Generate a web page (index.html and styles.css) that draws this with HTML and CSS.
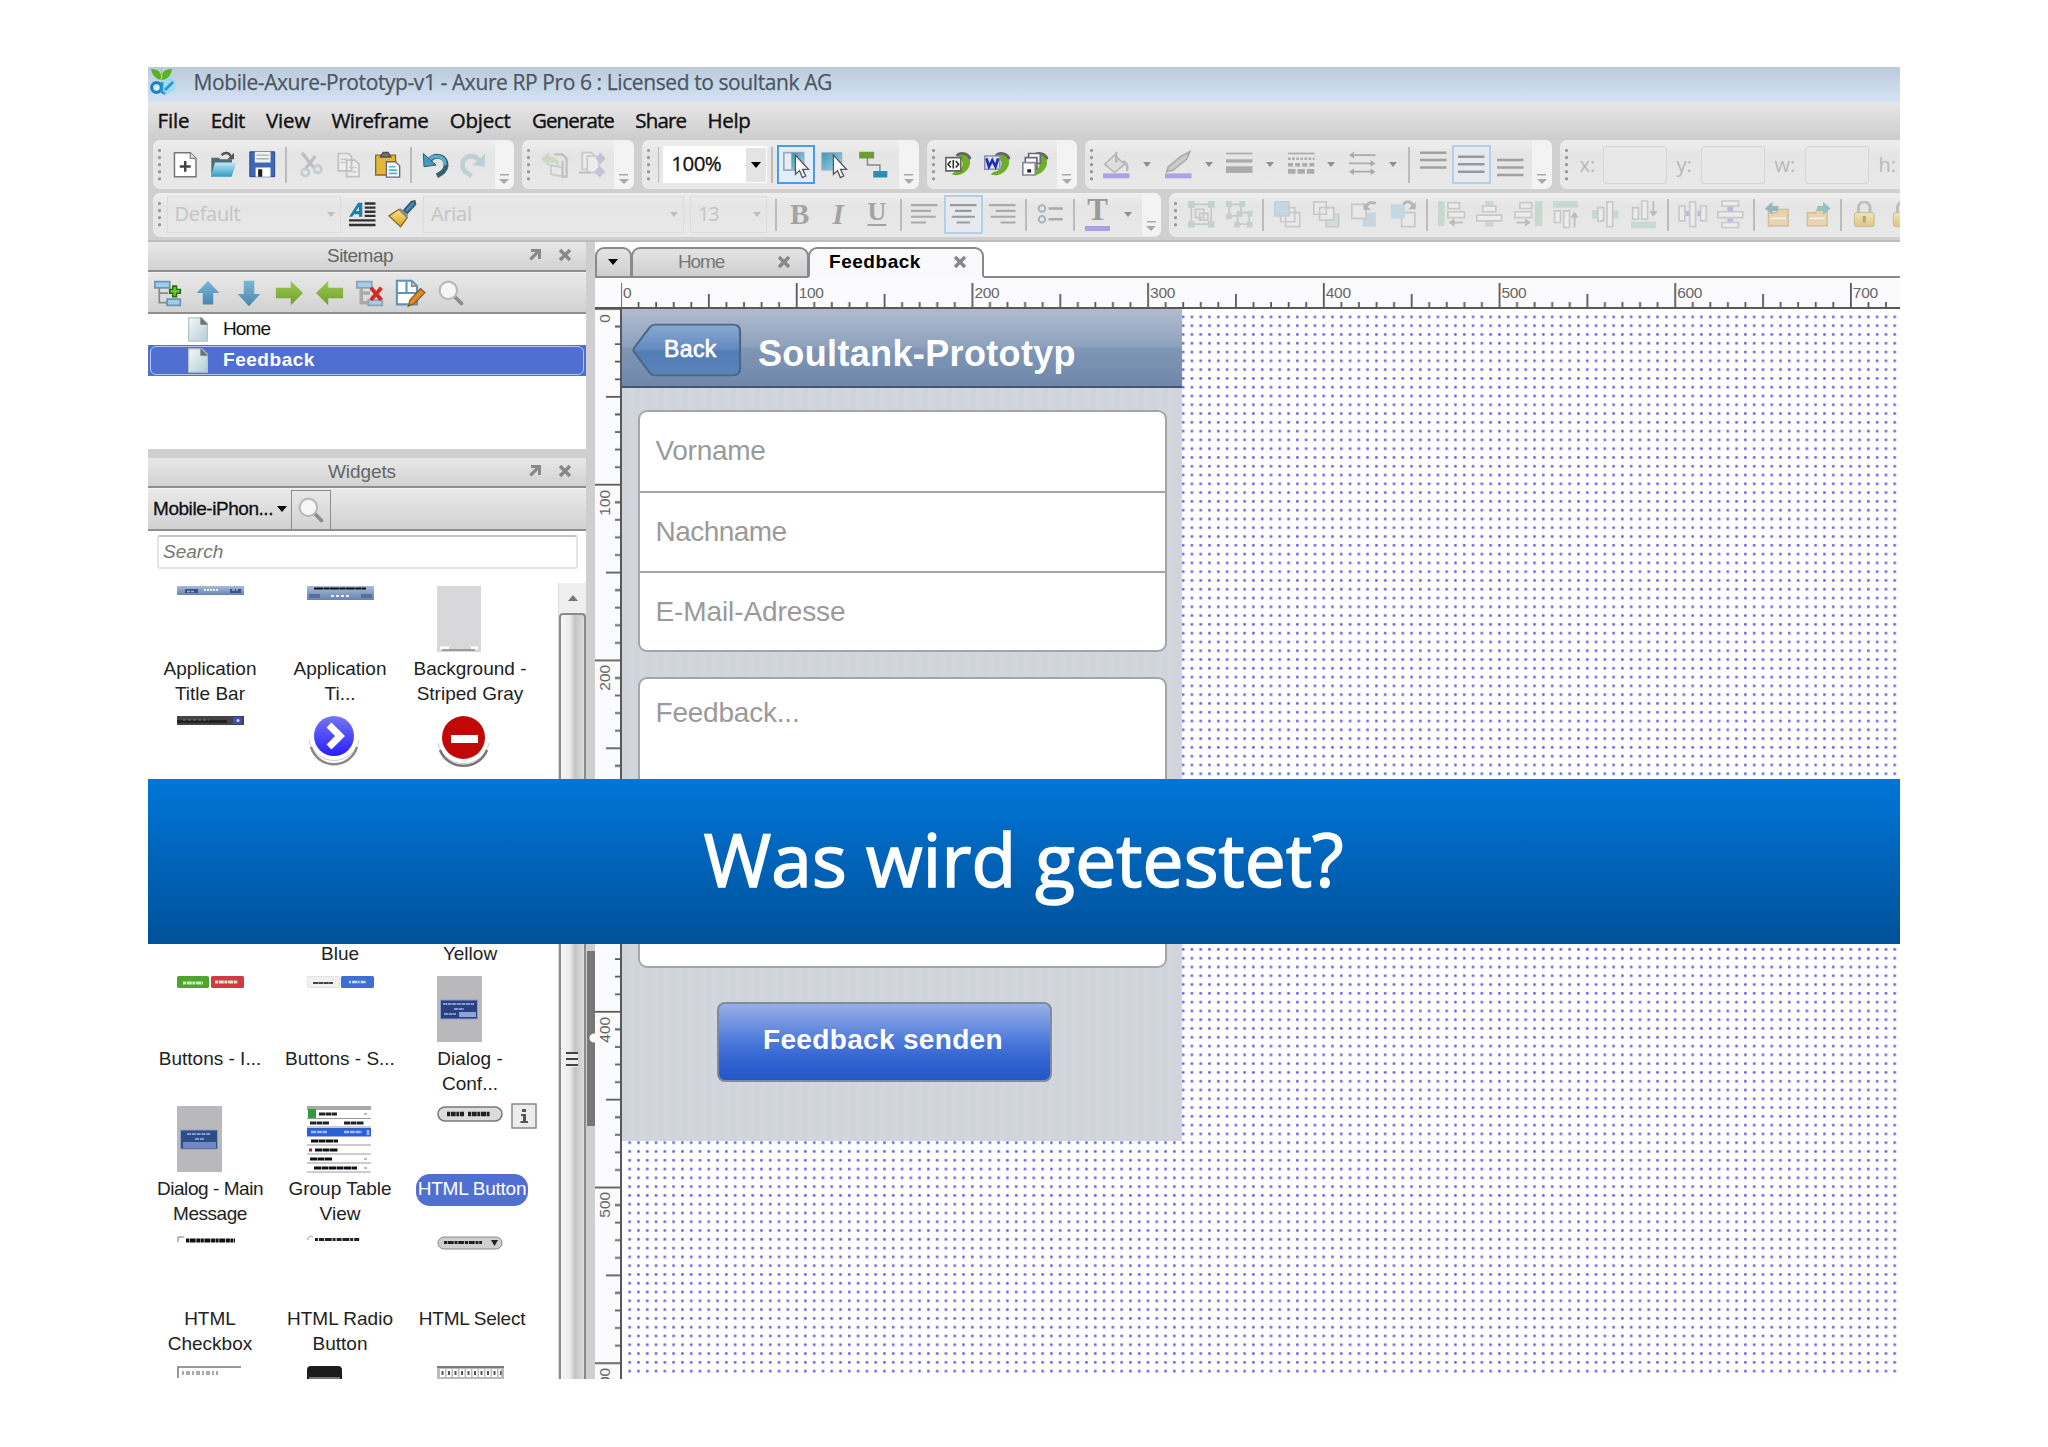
FILE: index.html
```html
<!DOCTYPE html>
<html lang="de">
<head>
<meta charset="utf-8">
<title>Mobile-Axure-Prototyp-v1</title>
<link rel="stylesheet" href="styles.css">
</head>
<body>
<svg class="defs" width="0" height="0">
  <defs>
    <linearGradient id="gBlue" x1="0" y1="0" x2="0" y2="1"><stop offset="0" stop-color="#bfe9f7"/><stop offset="1" stop-color="#2f9cc4"/></linearGradient>
    <linearGradient id="gArrow" x1="0" y1="0" x2="0" y2="1"><stop offset="0" stop-color="#7cb8d8"/><stop offset="1" stop-color="#4a86ad"/></linearGradient>
    <linearGradient id="gGreen" x1="0" y1="0" x2="0" y2="1"><stop offset="0" stop-color="#9ccb52"/><stop offset="1" stop-color="#6f9f2c"/></linearGradient>
    <linearGradient id="gGold" x1="0" y1="0" x2="0" y2="1"><stop offset="0" stop-color="#fbe48a"/><stop offset="1" stop-color="#d9a420"/></linearGradient>
    <linearGradient id="gPage" x1="0" y1="0" x2="1" y2="1"><stop offset="0" stop-color="#f4f8f8"/><stop offset="1" stop-color="#b4cdd6"/></linearGradient>
    <linearGradient id="gBar" x1="0" y1="0" x2="0" y2="1"><stop offset="0" stop-color="#a9bcd8"/><stop offset="1" stop-color="#6883ae"/></linearGradient>
    <linearGradient id="gTeal" x1="0" y1="0" x2="1" y2="1"><stop offset="0" stop-color="#3f93b4"/><stop offset="1" stop-color="#a5dbe8"/></linearGradient>
    <linearGradient id="gBack" x1="0" y1="0" x2="0" y2="1"><stop offset="0" stop-color="#89a9d2"/><stop offset=".5" stop-color="#6289bf"/><stop offset=".52" stop-color="#517db6"/><stop offset="1" stop-color="#5b84b7"/></linearGradient>
    <linearGradient id="gBall" x1="0" y1="0" x2="0" y2="1"><stop offset="0" stop-color="#7478ee"/><stop offset="1" stop-color="#2a1cff"/></linearGradient>
    <symbol id="magnifier" viewBox="0 0 16 16"><path d="M10 10l4 4" stroke="#8d8d8d" stroke-width="2.2" stroke-linecap="round"/><circle cx="6.5" cy="6.5" r="5" fill="#f6f6f6" stroke="#b9b9b9" stroke-width="1.2"/></symbol>
    <symbol id="page" viewBox="0 0 16 16"><path d="M2 .5h8.500l3.500 3.500v11.500H2z" fill="url(#gPage)" stroke="#b9c3c7" stroke-width=".8"/><path d="M9.500 0l5 5h-5z" fill="#6b7478"/></symbol>
    <symbol id="popout" viewBox="0 0 14 14"><path d="M3 1h10v10h-3V6L3.500 12.500l-2.300-2.300L7.500 4H3z" fill="#8a8a8a"/></symbol>
    <symbol id="cross" viewBox="0 0 14 14"><path d="M2 2l10 10M12 2L2 12" stroke="#888" stroke-width="3.400"/></symbol>
    <symbol id="pagecurl" viewBox="0 0 16 16"><path d="M8 2.500c4-3 8 1 7 5.500-1 4.500-6 8-11 6l2-1.500c3 0 5-2.500 4.500-6z" fill="#6fae24"/><path d="M7 3c2-2.500 7-2 8.300 2" fill="none" stroke="#666" stroke-width="1.600"/></symbol>
    <symbol id="folder" viewBox="0 0 16 16"><path d="M2 7h5l1-2h6v10H2z" fill="#eac27a" stroke="#b88a4c" stroke-width=".7"/><path d="M3.500 10.500h9" stroke="#fff" stroke-width="1"/></symbol>
    <symbol id="lock" viewBox="0 0 16 16"><path d="M4.500 7V4a3.500 3.500 0 017 0v3" fill="none" stroke="#999" stroke-width="1.800"/><rect x="2" y="7" width="12" height="8.500" rx="1.500" fill="url(#gGold)" stroke="#a98f3c" stroke-width=".6"/><path d="M8 9v4" stroke="#7a6520" stroke-width="1.800"/></symbol>
  </defs>
</svg>

<main class="app">
  <header class="titlebar">
    <svg class="logo" viewBox="0 0 28 28"><path d="M12 12l9-3 6 5-1 8-9 5-7-5z" fill="#9fdaf0"/><path d="M2 1c6 0 9 2 10 6 2-4 6-6 11-6-1 7-5 11-11 11C7 11 3 7 2 1z" fill="#5cb026"/><path d="M12 1c1 3 1 7 0 11" stroke="#9ad85c" stroke-width="1.500" fill="none"/><circle cx="7.500" cy="19.500" r="4.800" fill="#d8f0fa" stroke="#1c83bd" stroke-width="3.200"/><path d="M13 14v10l3 2M16 22l8-8" stroke="#2b93cb" stroke-width="2.600" fill="none"/></svg>
    <span>Mobile-Axure-Prototyp-v1 - Axure RP Pro 6 : Licensed to soultank AG</span>
  </header>
  <nav class="menubar">
    <span class="m-file">File</span><span class="m-edit">Edit</span><span class="m-view">View</span><span class="m-wire">Wireframe</span><span class="m-obj">Object</span><span class="m-gen">Generate</span><span class="m-share">Share</span><span class="m-help">Help</span>
  </nav>

  <section class="toolbars">
    <div class="row row-top">
      <div class="bar bar-file">
        <i class="grip"></i>
        <b class="ico"><svg viewBox="0 0 16 16"><path d="M1.500 1h9.500l3.500 3.500V15.500h-13z" fill="#fff" stroke="#777" stroke-width=".9"/><path d="M11 1v3.500h3.500" fill="#ddd" stroke="#888" stroke-width=".8"/><path d="M8 6v6.500M4.700 9.300h6.600" stroke="#444" stroke-width="1.500"/></svg></b>
        <b class="ico"><svg viewBox="0 0 16 16"><path d="M.8 4h4.500l1 1h7v9H.8z" fill="#4f6b78"/><path d="M3 7h13l-3 8.500H.5z" fill="url(#gBlue)"/><path d="M7 2.500c2-2 4.500-1.500 5.500.5" fill="none" stroke="#555" stroke-width="1.500"/><path d="M14.500 1v4h-4z" fill="#555"/></svg></b>
        <b class="ico"><svg viewBox="0 0 16 16"><path d="M.5.500h15v15h-15z" fill="#3f66b4" stroke="#27458a" stroke-width=".6"/><path d="M3.500.5h9.500v6.500H3.500z" fill="#f3f3ee"/><path d="M4.500 2.500h7.500M4.500 4.700h7.500" stroke="#a8b0b8" stroke-width=".8"/><path d="M4 10h9v5.500H4z" fill="#fff"/><path d="M5.500 11h2.500v4.500H5.500z" fill="#222"/></svg></b>
        <i class="sep"></i>
        <b class="ico off"><svg viewBox="0 0 16 16"><path d="M3 1l7 9M11 3l-6 8" stroke="#555" stroke-width="2"/><circle cx="5" cy="13" r="2.200" fill="none" stroke="#5c8890" stroke-width="1.600"/><circle cx="12.500" cy="11" r="2.200" fill="none" stroke="#5c8890" stroke-width="1.600"/></svg></b>
        <b class="ico off"><svg viewBox="0 0 16 16"><path d="M2 1.500h6l2 2V12H2zM7 5.500h5l2.500 2.500v7.500H7z" fill="#fff" stroke="#555"/><path d="M3.500 5h4M3.500 7h3M8.500 10h4.500M8.500 12.500h4.500" stroke="#777" stroke-width=".9"/></svg></b>
        <b class="ico"><svg viewBox="0 0 16 16"><path d="M1 2.500h12v12H1z" fill="#e3b73b" stroke="#8c6a1a" stroke-width=".8"/><path d="M4 3.500L5.500 1h3L10 3.500z" fill="#777" stroke="#555"/><path d="M7.500 6.500h5.500L15.500 9v6.800h-8z" fill="#f4fafc" stroke="#667" stroke-width=".8"/><path d="M9 9.500h4M9 11.500h5M9 13.500h5" stroke="#5db0cf"/></svg></b>
        <i class="sep"></i>
        <b class="ico"><svg viewBox="0 0 16 16"><path d="M4 6c4-5 11-3 10.500 3-.3 3-2.500 4.500-5.500 6" fill="none" stroke="#356072" stroke-width="3"/><path d="M4 5.500c4-4 10-2.500 9.800 3" fill="none" stroke="#58aed2" stroke-width="2"/><path d="M.8 1.500l.4 8 7.300-1z" fill="#3f9cc4" stroke="#356072" stroke-width=".6"/></svg></b>
        <b class="ico off"><svg viewBox="0 0 16 16"><path d="M12 6C8 1 1 3 1.500 9c.3 3 2.500 4.500 5.500 6" fill="none" stroke="#5797a3" stroke-width="3"/><path d="M15.200 1.500l-.4 8-7.300-1z" fill="#4a96a3"/></svg></b>
        <i class="more"></i>
      </div>
      <div class="bar bar-adapt">
        <i class="grip"></i>
        <b class="ico off"><svg viewBox="0 0 16 16"><path d="M6 8.500l7 1.500v5.500l-7-1.500z" fill="#e8e8e8" stroke="#777"/><path d="M8 2h5l2.500 2.500v11H13V6" fill="#ddd" stroke="#555" stroke-width="1.300"/><path d="M0 5l5-4.500v2.800c5 0 6.500 3 6 7.200C9.500 7.500 8 7 5 7v2.700z" fill="#8bb56a"/></svg></b>
        <b class="ico off"><svg viewBox="0 0 16 16"><path d="M2 1h5.500l2 2v8H2z" fill="#fff" stroke="#777"/><path d="M5 3h5l2 2v8H5z" fill="#fff" stroke="#777"/><path d="M0 13h7" stroke="#555" stroke-width="1.300"/><path d="M13 1l3 3.500-3 3.500-3-3.500zM12.500 9l3.500 3.500-3.500 3.500L9 12.500z" fill="#665fb0"/></svg></b>
        <i class="more"></i>
      </div>
      <div class="bar bar-zoom">
        <i class="grip"></i><i class="sep"></i>
        <div class="zoom"><span>100%</span><em></em></div>
        <i class="sep"></i>
        <b class="ico on"><svg viewBox="0 0 16 16"><path d="M.5 1h12v10.500H.5z" fill="#e6eef2" stroke="#9ab"/><path d="M5 1h7.500v10.500H5z" fill="url(#gTeal)"/><path d="M7.500 2.500v11.500l2.500-2.200 1.700 4.200 2-.9-1.900-4h3.600z" fill="#fff" stroke="#555" stroke-width=".8"/></svg></b>
        <b class="ico"><svg viewBox="0 0 16 16"><path d="M.5 1h12v10.500H.5z" fill="url(#gTeal)" stroke="#9ab" stroke-width=".6"/><path d="M7.500 2.500v11.500l2.500-2.200 1.700 4.200 2-.9-1.900-4h3.600z" fill="#fff" stroke="#555" stroke-width=".8"/></svg></b>
        <b class="ico"><svg viewBox="0 0 16 16"><path d="M4.500 4v4.500h7.500v4" fill="none" stroke="#888" stroke-width=".9"/><path d="M-.5.500h9V4.500h-9z" fill="#6d9c34"/><path d="M8 12h8.500v4H8z" fill="#2c8fb2"/></svg></b>
        <i class="more"></i>
      </div>
      <div class="bar bar-gen">
        <i class="grip"></i>
        <b class="ico"><svg viewBox="0 0 16 16"><use href="#pagecurl"/><path d="M.5 4h9v8h-9z" fill="#fff" stroke="#666"/><path d="M3.500 6L1.800 8l1.700 2M6.500 6l1.700 2-1.700 2M5 5.500v5" fill="none" stroke="#333"/></svg></b>
        <b class="ico"><svg viewBox="0 0 16 16"><use href="#pagecurl"/><path d="M.5 3h9v8h-9z" fill="#dfe6f8" stroke="#8a93b5"/><path d="M1.500 4.500l1.500 5 2-4 2 4 1.500-5" fill="none" stroke="#1d2fae" stroke-width="1.600"/></svg></b>
        <b class="ico"><svg viewBox="0 0 16 16"><use href="#pagecurl"/><path d="M4 1.500h7v6H4z" fill="#fff" stroke="#667"/><path d="M2 4h7v7H2z" fill="#fff" stroke="#667"/><path d="M.5 7H8v7.500H.5z" fill="#fff" stroke="#889"/><path d="M3.200 11h2.300v2H3.200z" fill="#222"/></svg></b>
        <i class="more"></i>
      </div>
      <div class="bar bar-style">
        <i class="grip"></i>
        <b class="ico dim"><svg viewBox="0 0 16 16"><path d="M1 8l6-5.500 6 5.500-6 5z" fill="#d8d8d8" stroke="#999"/><path d="M8 7V.5M12.500 6c2 2 2.500 3 2 6" fill="none" stroke="#999" stroke-width="1.400"/><path d="M0 13.500h16v3H0z" fill="#887ae0"/></svg></b><i class="caret"></i>
        <b class="ico dim"><svg viewBox="0 0 16 16"><path d="M1 12.500L2 9.500 10 3l5-2.500-2 4.500-8 6.500z" fill="#bbb" stroke="#888"/><path d="M0 13.500h16v3H0z" fill="#887ae0"/></svg></b><i class="caret"></i>
        <b class="ico dim"><svg viewBox="0 0 16 16"><path d="M0 1.500h16" stroke="#888"/><path d="M0 6h16" stroke="#888" stroke-width="2"/><path d="M0 11.200h16" stroke="#888" stroke-width="4"/></svg></b><i class="caret"></i>
        <b class="ico dim"><svg viewBox="0 0 16 16"><path d="M0 1.500h16" stroke="#888"/><path d="M0 4.700h16" stroke="#888" stroke-width="1.600" stroke-dasharray="1.500 1"/><path d="M0 8.300h16" stroke="#888" stroke-width="2.200" stroke-dasharray="3 1.300"/><path d="M0 12.300h16" stroke="#888" stroke-width="3" stroke-dasharray="4.500 1.200"/></svg></b><i class="caret"></i>
        <b class="ico dim"><svg viewBox="0 0 16 16"><path d="M1 2.500h15M0 7.500h15M1 12.500h14" stroke="#888" stroke-width="1.100"/><path d="M3 .5v4L0 2.500zM13 5.500v4l3-2zM3 10.500v4l-3-2zM13 10.500v4l3-2z" fill="#888"/></svg></b><i class="caret"></i>
        <i class="sep"></i>
        <b class="ico dim"><svg viewBox="0 0 16 16"><path d="M0 1h16M0 5.500h16M0 10h16" stroke="#777" stroke-width="1.500"/></svg></b>
        <b class="ico on pale"><svg viewBox="0 0 16 16"><path d="M0 3.500h16M0 8h16M0 12.500h16" stroke="#999" stroke-width="1.500"/></svg></b>
        <b class="ico dim"><svg viewBox="0 0 16 16"><path d="M0 5.500h16M0 10h16M0 14.500h16" stroke="#777" stroke-width="1.500"/></svg></b>
        <i class="more"></i>
      </div>
      <div class="bar bar-pos">
        <i class="grip"></i>
        <label>x:</label><i class="field"></i><label class="ly">y:</label><i class="field"></i><label class="lw">w:</label><i class="field"></i><label>h:</label>
      </div>
    </div>

    <div class="row row-bottom">
      <div class="bar bar-text">
        <i class="grip"></i>
        <div class="combo c-style"><span>Default</span><i class="caret"></i></div>
        <b class="ico"><svg viewBox="0 0 16 16"><path d="M0 9.500L5.500 1H8v8.500H6V8H3L2 9.500zM4.200 6H6V3.500z" fill="#1f7fa8"/><path d="M9.500 1.500H16M9.500 4H16M9.500 6.500H16M9.500 9H16M0 11.700h16M0 14.500h16" stroke="#333" stroke-width="1.400"/></svg></b>
        <b class="ico wide"><svg viewBox="0 0 16 16"><path d="M15.500 0l.5 2-5 5.500-2-2L13.500.5z" fill="#3c8fbd" stroke="#356"/><path d="M6 5l5 5-4 5.500L0 9z" fill="url(#gGold)" stroke="#8b6a1c" stroke-width=".8"/><path d="M6.500 5l4.500 4.500" stroke="#8a8a8a" stroke-width="1.800"/></svg></b>
        <div class="combo c-font"><span>Arial</span><i class="caret"></i></div>
        <div class="combo c-size"><span>13</span><i class="caret"></i></div>
        <i class="sep"></i>
        <b class="ico fmt bold">B</b><b class="ico fmt ital">I</b><b class="ico fmt under">U</b>
        <i class="sep"></i>
        <b class="ico dim"><svg viewBox="0 0 16 16"><path d="M0 2.500h16M0 6h12M0 9.500h15M0 13h9" stroke="#888" stroke-width="1.300"/></svg></b>
        <b class="ico on pale"><svg viewBox="0 0 16 16"><path d="M0 2.500h16M3 6h10M1 9.500h14M4 13h8" stroke="#999" stroke-width="1.300"/></svg></b>
        <b class="ico dim"><svg viewBox="0 0 16 16"><path d="M0 2.500h16M4 6h12M1 9.500h15M7 13h9" stroke="#888" stroke-width="1.300"/></svg></b>
        <i class="sep"></i>
        <b class="ico dim"><svg viewBox="0 0 16 16"><circle cx="3" cy="4.500" r="2" fill="none" stroke="#7a9aa5" stroke-width="1.200"/><circle cx="3" cy="11" r="2" fill="none" stroke="#7a9aa5" stroke-width="1.200"/><path d="M7 4.500h8.500M7 11h8.500" stroke="#888" stroke-width="1.500"/></svg></b>
        <i class="sep"></i>
        <b class="ico tcolor">T</b><i class="caret"></i>
        <i class="more"></i>
      </div>
      <div class="bar bar-arrange">
        <i class="grip"></i>
        <b class="ico off"><svg viewBox="0 0 16 16"><path d="M2 2h12v12H2zM4.500 5h5v5h-5zM7 7.500h5v4H7z" fill="none" stroke="#777"/><path d="M0 0h4v4H0zM12 0h4v4h-4zM0 12h4v4H0zM12 12h4v4h-4z" fill="#5f948c"/></svg></b>
        <b class="ico off"><svg viewBox="0 0 16 16"><path d="M2 2h7v7H2zM7 7h7v7H7z" fill="none" stroke="#777"/><path d="M0 0h3.500v3.500H0zM8 0h3.500v3.500H8zM0 7.500h3.500V11H0zM6.500 6H10v3.500H6.500zM13 6h3v3.500h-3zM5 12.500h3.500V16H5zM12.500 12.500H16V16h-3.500z" fill="#5f948c"/></svg></b>
        <i class="sep"></i>
        <b class="ico off"><svg viewBox="0 0 16 16"><path d="M7 7h8.500v8.500H7zM4 4h8.500v8.500H4z" fill="#f2f2f2" stroke="#777"/><path d="M.5.500H9V9H.5z" fill="#69b3d8" stroke="#6a8fa5"/></svg></b>
        <b class="ico off"><svg viewBox="0 0 16 16"><path d="M8 8h7.500v7.500H8z" fill="#8fc4c4" stroke="#777"/><path d="M4 4h8.500v7.500H4zM.5.500H8V8H.5z" fill="#f2f2f2" stroke="#777"/></svg></b>
        <b class="ico off"><svg viewBox="0 0 16 16"><path d="M7 7h8v8.500H7z" fill="#69a8d8"/><path d="M.5 2H9v8.500H.5z" fill="#f2f2f2" stroke="#777"/><path d="M15 1.500c-3-1.500-5 0-6 2" fill="none" stroke="#333" stroke-width="1.800"/><path d="M7.500 1v4.500H12z" fill="#333"/></svg></b>
        <b class="ico off"><svg viewBox="0 0 16 16"><path d="M7 7h8v8.500H7z" fill="#f2f2f2" stroke="#777"/><path d="M.5 2H9v8.500H.5z" fill="#69b3d8"/><path d="M8 2c2-2.500 4.500-2 6 1" fill="none" stroke="#333" stroke-width="1.800"/><path d="M15.500.500V5H11z" fill="#333"/></svg></b>
        <i class="sep"></i>
        <b class="ico off"><svg viewBox="0 0 16 16"><path d="M0 0h4v15H0z" fill="#6fb595"/><path d="M6 1h7v3.500H6zM6 6.500h10V10H6z" fill="#fff" stroke="#777"/><path d="M7 13h8" stroke="#444"/><path d="M10 10.500v5L6.500 13z" fill="#444"/></svg></b>
        <b class="ico off"><svg viewBox="0 0 16 16"><path d="M5.500 0h5v3h-5zM5.500 12h5v3.500h-5z" fill="#6fb595"/><path d="M4 3h8v3.500H4zM.5 8.500h15V12H.500z" fill="#fff" stroke="#777"/></svg></b>
        <b class="ico off"><svg viewBox="0 0 16 16"><path d="M12 0h4.500v15H12z" fill="#6fb595"/><path d="M3 1h7v3.500H3zM0 6.500h10V10H0z" fill="#fff" stroke="#777"/><path d="M1 13h8" stroke="#444"/><path d="M6 10.500v5L9.500 13z" fill="#444"/></svg></b>
        <b class="ico off"><svg viewBox="0 0 16 16"><path d="M0 0h15v4H0z" fill="#6fb595"/><path d="M1 6h3.500v7H1zM6.500 6H10v10H6.500z" fill="#fff" stroke="#777"/><path d="M13 8v8" stroke="#444"/><path d="M10.500 10h5L13 6.500z" fill="#444"/></svg></b>
        <b class="ico off"><svg viewBox="0 0 16 16"><path d="M0 5.500h3v5H0zM13 5.500h3v5h-3z" fill="#6fb595"/><path d="M3.500 4H7v8H3.500zM9 .500h3.500v15H9z" fill="#fff" stroke="#777"/></svg></b>
        <b class="ico off"><svg viewBox="0 0 16 16"><path d="M0 12.500h15v4H0z" fill="#6fb595"/><path d="M1 4h3.500v7H1zM6.500 0H10v11H6.500z" fill="#fff" stroke="#777"/><path d="M13.500 0v8" stroke="#444"/><path d="M11 6h5l-2.500 3.500z" fill="#444"/></svg></b>
        <i class="sep"></i>
        <b class="ico off"><svg viewBox="0 0 16 16"><path d="M0 3h3.500v9H0zM6.500 .500H10v15H6.500zM13 3h3.500v9H13z" fill="#fff" stroke="#777"/><path d="M4 7.500h2M11 7.500h2" stroke="#4a3fd8" stroke-width="3"/></svg></b>
        <b class="ico off"><svg viewBox="0 0 16 16"><path d="M3 0h10v3H3zM.5 6.500h15V10H.5zM3 13h10v3H3z" fill="#fff" stroke="#777"/><path d="M8 3.500v2.500M8 10.500v2" stroke="#4a3fd8" stroke-width="3.500"/></svg></b>
        <i class="sep"></i>
        <b class="ico half"><svg viewBox="0 0 16 16"><use href="#folder"/><path d="M0 4.500L4.500.5v2.500H8v3H4.500v2.500z" fill="#4b8795"/></svg></b>
        <b class="ico half"><svg viewBox="0 0 16 16"><use href="#folder"/><path d="M16 4.500L11.500.5v2.500H8v3h3.500v2.500z" fill="#4b9bb0"/></svg></b>
        <i class="sep"></i>
        <b class="ico half"><svg viewBox="0 0 16 16"><use href="#lock"/></svg></b>
        <b class="ico half"><svg viewBox="0 0 16 16"><use href="#lock"/></svg></b>
      </div>
    </div>
  </section>

  <section class="work">
    <aside class="side">
      <div class="panel-head"><span>Sitemap</span><svg><use href="#popout"/></svg><svg><use href="#cross"/></svg></div>
      <div class="tools">
        <svg viewBox="0 0 16 16"><path d="M3 4v9.500h5M3 8h5" fill="none" stroke="#888"/><path d="M.5 1.500h8.500v3.500H.5zM7.500 11.500H15V15H7.500z" fill="#9fcdec" stroke="#6f94ab"/><path d="M11.800 3.500v7M8.500 7h7" stroke="#2a6a10" stroke-width="3"/><path d="M11.800 4.500v5M9.500 7h5" stroke="#67c832" stroke-width="1.400"/></svg>
        <svg viewBox="0 0 16 16"><path d="M8 1l6.500 7H11v6.500H5V8H1.500z" fill="url(#gArrow)"/></svg>
        <svg viewBox="0 0 16 16"><path d="M8 15.500L1.500 8.500H5V1h6v7.500h3.500z" fill="url(#gArrow)"/></svg>
        <svg viewBox="0 0 16 16"><path d="M16 8L9 15v-4H.5V5H9V1z" fill="url(#gGreen)"/></svg>
        <svg viewBox="0 0 16 16"><path d="M0 8l7-7v4h8.500v6H7v4z" fill="url(#gGreen)"/></svg>
        <svg viewBox="0 0 16 16"><path d="M3 4v9.500h5M3 8h5" fill="none" stroke="#aaa" stroke-width="2"/><path d="M.5 1.500h8.500v3.500H.5zM7 12h8v3H7z" fill="#a8cde8" stroke="#8aa5b8"/><path d="M8.500 5l6 7M14.500 5l-6 7" stroke="#d42a24" stroke-width="2.200"/></svg>
        <svg viewBox="0 0 16 16"><path d="M.5 1h8.500l3 3v10.500H.500z" fill="#fff" stroke="#5e94ba" stroke-width="1.200"/><path d="M.5 8H12M6 8V1.500" stroke="#5e94ba" stroke-width="1.200"/><path d="M9 1v3h3" fill="none" stroke="#888"/><path d="M7 15.500l1-3.500 6-6.500 2.500 2.300L10.500 14z" fill="#e08a22" stroke="#7c5a2a" stroke-width=".7"/></svg>
        <svg><use href="#magnifier"/></svg>
      </div>
      <ul class="tree">
        <li><svg><use href="#page"/></svg><span>Home</span></li>
        <li class="sel"><svg><use href="#page"/></svg><span>Feedback</span></li>
      </ul>
      <div class="panel-head second"><span>Widgets</span><svg><use href="#popout"/></svg><svg><use href="#cross"/></svg></div>
      <div class="lib"><span>Mobile-iPhon...</span><i class="caret black"></i><b><svg><use href="#magnifier"/></svg></b></div>
      <div class="search"><span>Search</span></div>
      <div class="widgets">
        <div class="grid">
          <figure><svg viewBox="0 0 67 67"><path d="M0 0h67v9H0z" fill="url(#gBar)"/><path d="M8 5h13M53 5h11" stroke="#39508c" stroke-width="4"/><path d="M10 5.500h8M55 4h6" stroke="#9fb2dc" stroke-width="1.500" stroke-dasharray="3 1"/><path d="M27 4h14" stroke="#e8eef5" stroke-width="2" stroke-dasharray="2 1"/></svg><figcaption>Application<br>Title Bar</figcaption></figure>
          <figure><svg viewBox="0 0 67 67"><path d="M0 0h67v14H0z" fill="url(#gBar)"/><path d="M7 2.500h52" stroke="#111" stroke-width="1.800" stroke-dasharray="9 .5 6 .4"/><path d="M2 10h11M54 10h11" stroke="#5570a0" stroke-width="4"/><path d="M24 10h20" stroke="#e8eef5" stroke-width="2" stroke-dasharray="3 2"/></svg><figcaption>Application<br>Ti...</figcaption></figure>
          <figure><svg viewBox="0 0 67 67"><path d="M0 0h44v66H0z" fill="#d8d8da"/><path d="M3 62h9M34 62h7" stroke="#fff" stroke-width="3"/><path d="M5 64h33" stroke="#888" stroke-width="1.500"/></svg><figcaption>Background -<br>Striped Gray</figcaption></figure>

          <figure><svg viewBox="0 0 67 67"><path d="M0 0h67v9H0z" fill="#444"/><path d="M0 5.500h50" stroke="#222" stroke-width="3"/><path d="M6 4h26" stroke="#777" stroke-width="1" stroke-dasharray="3 2"/><path d="M56 1h9v7h-9z" fill="#3f4fb8"/><circle cx="61" cy="4.500" r="1.500" fill="#cdf"/></svg></figure>
          <figure><svg viewBox="0 0 67 67"><path d="M1 20a26 26 0 0052 0z" fill="#fff"/><path d="M2 24a25.500 25.500 0 0050 0" fill="none" stroke="#ccc" stroke-width="1"/><path d="M4 31a24 24 0 0046 0" fill="none" stroke="#888" stroke-width="2.500"/><circle cx="27" cy="20" r="20" fill="url(#gBall)"/><path d="M22 9l11 11-11 11" fill="none" stroke="#fff" stroke-width="7"/></svg></figure>
          <figure><svg viewBox="0 0 67 67"><path d="M0 24a26.500 26 0 0053 0z" fill="#fff"/><path d="M1 27a26 25.500 0 0051 0" fill="none" stroke="#ccc" stroke-width="1"/><path d="M3 34a25 24 0 0047 0" fill="none" stroke="#777" stroke-width="2.500"/><circle cx="26.500" cy="21.500" r="21.500" fill="#c00808"/><path d="M14 19h27v8H14z" fill="#fff"/></svg></figure>

          <figure></figure>
          <figure><figcaption><br>Blue</figcaption></figure>
          <figure><figcaption><br>Yellow</figcaption></figure>

          <figure><svg viewBox="0 0 67 67"><rect width="32" height="12" rx="1.500" fill="#4da62b"/><rect x="34" width="33" height="12" rx="1.500" fill="#cf3a45"/><path d="M6 7h20M38 6h23" stroke="#d3ecc8" stroke-width="3" stroke-dasharray="3 .8 5 .6"/></svg><figcaption>Buttons - I...</figcaption></figure>
          <figure><svg viewBox="0 0 67 67"><rect x=".5" y=".5" width="32" height="11" rx="1.500" fill="#f0f0f0" stroke="#e2e2e2"/><rect x="34" width="33" height="12" rx="1.500" fill="#3f6fd4"/><path d="M6 7h20" stroke="#444" stroke-width="2.200" stroke-dasharray="5 .4"/><path d="M42 6h17" stroke="#c8d8f8" stroke-width="2.500" stroke-dasharray="2 1 5 .6"/></svg><figcaption>Buttons - S...</figcaption></figure>
          <figure><svg viewBox="0 0 67 67"><path d="M0 0h45v66H0z" fill="#b9b9bb"/><path d="M3.500 24h37v19h-37z" fill="#2a4180" stroke="#8f9cc4"/><path d="M6 28h31M17 33h10M7 38h12" stroke="#8599cf" stroke-width="2" stroke-dasharray="4 .6"/><path d="M22 36h17v5H22z" fill="#8fa3d8"/></svg><figcaption>Dialog -<br>Conf...</figcaption></figure>

          <figure><svg viewBox="0 0 67 67"><path d="M0 0h45v66H0z" fill="#b9b9bb"/><path d="M3.500 24h37v19h-37z" fill="#2b4c87" stroke="#8f9cc4"/><path d="M10 28h24M18 33h9" stroke="#8599cf" stroke-width="2" stroke-dasharray="4 .8"/><path d="M6 36h33v6H6z" fill="#7188c4"/></svg><figcaption class="tight">Dialog - Main<br>Message</figcaption></figure>
          <figure><svg viewBox="0 0 67 67"><path d="M0 0h64v4H0z" fill="#aaa"/><path d="M1 3h8v9H1z" fill="#2f9b3a"/><path d="M12 8h18M3 17h19M37 17h20" stroke="#222" stroke-width="3" stroke-dasharray="6 .5"/><path d="M0 12.500h64M0 21h64M0 39h64M0 48h64M0 57h64M0 66h64" stroke="#999"/><path d="M0 22h64v8.500H0z" fill="#2a5fd6"/><path d="M4 26h16M37 26h18M61 24v5" stroke="#9fc0fa" stroke-width="2.500" stroke-dasharray="5 .8"/><path d="M4 35h27M8 44h23M3 53h22M7 62h43" stroke="#111" stroke-width="3" stroke-dasharray="7 .5"/><path d="M2 44h3" stroke="#b02030" stroke-width="3"/><path d="M57 8h3M57 53h3M57 62h3" stroke="#bbb" stroke-width="2"/></svg><figcaption>Group Table<br>View</figcaption></figure>
          <figure class="picked"><svg viewBox="0 0 67 67"><rect x="1" y="1" width="64" height="14" rx="7" fill="#dcdcdc" stroke="#777" stroke-width="1.500"/><path d="M10 8h17M31 8h22" stroke="#222" stroke-width="4.500" stroke-dasharray="3 .7 5 .6"/></svg><svg class="info" viewBox="0 0 26 26"><rect x="1" y="1" width="24" height="24" fill="#ececec" stroke="#888" stroke-width="1.500"/><path d="M11 6h4v3h-4zM10 11h5v7h2v2H9.500v-2H12v-5h-2z" fill="#555"/></svg><figcaption class="html"><mark>HTML Button</mark></figcaption></figure>

          <figure><svg viewBox="0 0 67 67"><path d="M1 6V1h6" fill="none" stroke="#777"/><path d="M9 4.500h49" stroke="#111" stroke-width="4" stroke-dasharray="3 .6 6 .7 4 .5"/></svg><figcaption>HTML<br>Checkbox</figcaption></figure>
          <figure><svg viewBox="0 0 67 67"><path d="M1 4a3 3 0 015-3" fill="none" stroke="#999"/><path d="M8 3.500h45" stroke="#222" stroke-width="3" stroke-dasharray="3 1 5 .8 7 .8"/></svg><figcaption>HTML Radio<br>Button</figcaption></figure>
          <figure><svg viewBox="0 0 67 67"><rect x="1" y="1" width="64" height="12" rx="6" fill="#cfcfcf" stroke="#888"/><path d="M7 6.500h38" stroke="#222" stroke-width="3.200" stroke-dasharray="3 .7 6 .8"/><path d="M54 4h7l-3.500 6z" fill="#222"/></svg><figcaption class="html">HTML Select</figcaption></figure>

          <figure><svg viewBox="0 0 67 67"><path d="M1 12V1h63" fill="none" stroke="#777" stroke-width="1.500"/><path d="M5 7h36" stroke="#aaa" stroke-width="4" stroke-dasharray="2 2 4 2"/></svg></figure>
          <figure><svg viewBox="0 0 67 67"><rect width="35" height="20" rx="4" fill="#1c1c1e"/><path d="M2 11h31v2H2z" fill="#777"/></svg></figure>
          <figure><svg viewBox="0 0 67 67"><path d="M0 0h67v13H0z" fill="#bbb"/><path d="M0 1h67" stroke="#666" stroke-width="1.500"/><path d="M3 7h61" stroke="#fff" stroke-width="8" stroke-dasharray="5 1.500"/><path d="M4.500 7h60" stroke="#555" stroke-width="4" stroke-dasharray="2 4.500"/></svg></figure>
        </div>
        <div class="scroll"><i class="up"></i><div class="thumb"><i></i></div></div>
      </div>
    </aside>

    <div class="splitter"><i></i></div>

    <section class="editor">
      <div class="tabs">
        <div class="tab pick"><i class="caret black"></i></div>
        <div class="tab home"><span>Home</span><svg><use href="#cross"/></svg></div>
        <div class="tab active"><span>Feedback</span><svg><use href="#cross"/></svg></div>
        <div class="fill"></div>
      </div>
      <div class="hruler">
        <svg width="1278" height="31"><defs><pattern id="ht" width="175.700" height="31" patternUnits="userSpaceOnUse" x="-.9"><path d="M.9 5v25M88.750 16v14M18.470 24v6M36.040 24v6M53.610 24v6M71.180 24v6M106.320 24v6M123.890 24v6M141.460 24v6M159.030 24v6" stroke="#585858" stroke-width="1.800"/></pattern></defs><rect width="1278" height="31" fill="url(#ht)"/></svg>
        <div class="nums"><span>0</span><span>100</span><span>200</span><span>300</span><span>400</span><span>500</span><span>600</span><span>700</span></div>
      </div>
      <div class="stage">
        <div class="vruler">
          <svg width="27" height="1070"><defs><pattern id="vt" width="27" height="175.700" patternUnits="userSpaceOnUse" y="-.9"><path d="M0 .9h26M11 88.750h15M20 18.470h6M20 36.040h6M20 53.610h6M20 71.180h6M20 106.320h6M20 123.890h6M20 141.460h6M20 159.030h6" stroke="#585858" stroke-width="1.800"/></pattern></defs><rect width="27" height="1070" fill="url(#vt)"/></svg>
          <div class="nums"><span>0</span><span>100</span><span>200</span><span>300</span><span>400</span><span>500</span><span>600</span></div>
        </div>
        <div class="canvas">
          <svg class="dots" width="1279" height="1069"><defs><pattern id="dt" width="8.785" height="8.785" patternUnits="userSpaceOnUse" x="-4.400" y="3.600"><rect x="3.100" y="3.100" width="2.400" height="2.400" fill="#5a50ee"/></pattern></defs><rect x="4" y="4" width="1275" height="1065" fill="url(#dt)"/></svg>
          <div class="phone">
            <div class="phone-head">
              <div class="back"><svg viewBox="0 0 110 66" preserveAspectRatio="none"><path d="M23 2h78q7 0 7 8v46q0 8-7 8H23q-3 0-5-3L3 37q-3-4 0-8L18 5q2-3 5-3z" fill="url(#gBack)" stroke="#4d6685" stroke-width="2.200"/></svg><span>Back</span></div>
              <h1>Soultank-Prototyp</h1>
            </div>
            <div class="card form"><p class="f-first">Vorname</p><p class="f-last">Nachname</p><p class="f-mail">E-Mail-Adresse</p></div>
            <div class="card note"><p>Feedback...</p></div>
            <div class="send"><span>Feedback senden</span></div>
          </div>
        </div>
      </div>
    </section>
  </section>

  <div class="banner"><span>Was wird getestet?</span></div>
</main>
</body>
</html>
```
FILE: styles.css
```css
* { box-sizing: border-box; margin: 0; padding: 0; }
body { background: #fff; font: 19px/24.600px "Liberation Sans", Arial, sans-serif; color: #222; }
i, em { font-style: normal; display: block; }
b { font-weight: normal; }
svg { display: block; flex: none; overflow: visible; }
.defs { position: absolute; }

.app { position: relative; display: flex; flex-direction: column; width: 1751.500px; height: 1312px; margin: 67px 0 0 148px; overflow: hidden; background: #d0d0d0; }

.titlebar { display: flex; align-items: center; height: 35px; padding: 0 0 5px 1px; background: linear-gradient(#bccbdb, #d3e3f3); font: 21px/30px "Open Sans", "Noto Sans", sans-serif; letter-spacing: -.41px; color: #4c5662; -webkit-text-stroke: .25px #4c5662; white-space: nowrap; }
.logo { width: 28px; height: 28px; margin-right: 16.500px; }
.menubar { display: flex; gap: 21.300px; height: 38px; padding: 2px 0 0 9.500px; background: linear-gradient(#e6e6e6, #cdcdcd); font: 20.500px/32px "Open Sans", "Noto Sans", sans-serif; color: #111; -webkit-text-stroke: .4px #111; white-space: nowrap; }
.m-file { letter-spacing: -.11px; }
.m-edit { letter-spacing: -.61px; }
.m-view { letter-spacing: -.2px; }
.m-wire { letter-spacing: -.46px; }
.m-obj { letter-spacing: -.22px; }
.m-gen { letter-spacing: -.89px; }
.m-share { letter-spacing: -.82px; }
.m-help { letter-spacing: -.34px; }

.toolbars { height: 102px; padding-left: 5px; background: #d0d0d0; border-bottom: 2px solid #bdbdbd; }
.row { display: flex; gap: 8px; }
.row-top { height: 49px; margin-bottom: 4px; }
.row-bottom { height: 44px; }
.bar { display: flex; align-items: center; flex: none; border-radius: 7px; background: linear-gradient(#efefef, #e5e5e5 30%, #e9e9e9); overflow: hidden; }
.row-bottom .bar { padding-bottom: 1px; }
.bar-file { width: 361px; }
.bar-adapt { width: 111.500px; }
.bar-zoom { width: 277px; }
.bar-gen { width: 150px; }
.bar-style { width: 467px; }
.bar-pos { width: 350px; }
.bar-text { width: 1008px; }
.bar-arrange { width: 740px; }
.grip { flex: none; width: 3px; height: 32px; margin: 0 4.500px 0 5px; background: radial-gradient(circle at 1.500px 1.500px, #999 1.300px, transparent 1.800px) 0 0 / 3px 7.100px; }
.row-bottom .grip { height: 25px; }
.ico { display: flex; align-items: center; justify-content: center; flex: none; width: 38.600px; height: 39px; }
.ico svg { width: 26.500px; height: 26.500px; }
.ico.wide { width: 42px; }
.ico.off { opacity: .26; }
.ico.half { opacity: .5; }
.ico.dim { opacity: .62; }
.ico.on { border: 2px solid #4c9bea; background: #e4eef8; }
.ico.on.pale { border-color: #b4cfe6; background: #e6eaee; }
.sep { flex: none; width: 1.700px; height: 36px; margin: 0 3.800px; background: #bcbcbc; }
.row-bottom .sep { height: 32px; }
.caret { flex: none; width: 22.900px; display: flex; justify-content: center; }
.caret::after { content: ""; border: 4.500px solid transparent; border-top: 5px solid #8f8f8f; border-bottom: 0; }
.caret.black::after { border-top-color: #000; border-width: 6px 5.500px 0; }
.more { flex: none; width: 19.500px; height: 100%; margin-left: auto; background: linear-gradient(#a9a9a9, #a9a9a9) 50% calc(100% - 14px) / 9px 1.500px no-repeat, #f3f3f3; display: flex; align-items: flex-end; justify-content: center; padding-bottom: 5px; }
.more::after { content: ""; border: 5px solid transparent; border-top: 5px solid #a9a9a9; border-bottom: 0; }
.zoom { display: flex; align-items: center; flex: none; width: 104px; height: 37px; padding-left: 8px; background: #fff; font: 20.500px/36px "Open Sans", sans-serif; letter-spacing: -.53px; color: #111; -webkit-text-stroke: .3px #111; }
.zoom span { margin-top: -3px; }
.zoom em { display: flex; align-items: center; justify-content: center; width: 20px; height: 34px; margin: 0 1px 0 auto; background: #e4e4e4; }
.zoom em::after { content: ""; border: 5.500px solid transparent; border-top: 6px solid #000; border-bottom: 0; }
.bar-pos label { flex: none; margin: 0 10px 0 0; font: 20px/30px "Open Sans", sans-serif; color: #b9b9b9; width: 13px; white-space: nowrap; }
.bar-pos .grip { margin-right: 12px; }
.bar-pos .field { flex: none; width: 64px; height: 38px; margin-right: 10px; border: 1.700px solid #d6d6d6; border-radius: 3px; background: #e8e8e8; }
.bar-pos .ly { width: 14px; }
.bar-pos .lw { width: 20px; }
.combo { display: flex; align-items: center; flex: none; height: 37px; padding-left: 7px; border: 1.700px solid #dcdcdc; font: 20px/33px "Open Sans", sans-serif; letter-spacing: -.3px; color: #c4c4c4; margin-right: 2px; }
.combo span { margin-top: -2px; }
.combo .caret { width: 18px; margin-left: auto; opacity: .45; }
.c-style { width: 174px; margin-left: 1px; }
.c-font { width: 261px; margin-right: 6px; }
.c-size { width: 77px; margin-right: 4px; letter-spacing: -1.200px; }
.fmt { font: bold 29px/34px "Liberation Serif", serif; color: #a3a3a3; padding-bottom: 2px; }
.fmt.ital { font-style: italic; }
.fmt.under { text-decoration: underline; text-decoration-thickness: 2px; text-underline-offset: 4px; font-size: 26px; padding-bottom: 6px; }
.tcolor { font: bold 31px/23px "Liberation Serif", serif; color: #9a9a9a; background: linear-gradient(#aaa1e0, #aaa1e0) 50% 31px / 25px 5px no-repeat; padding-bottom: 10px; }

.work { display: flex; flex: 1; min-height: 0; }
.side { display: flex; flex-direction: column; width: 438px; flex: none; }
.panel-head { display: flex; align-items: center; flex: none; height: 30px; padding: 0 13px 0 179px; background: linear-gradient(#e8e8e8, #d2d2d2); border-bottom: 2px solid #8e8e8e; color: #666; }
.panel-head span { width: 201px; letter-spacing: -.53px; }
.panel-head svg { width: 14px; height: 14px; margin-bottom: 3px; }
.panel-head svg:last-child { margin-left: 16px; }
.panel-head.second { margin-top: 9px; padding-left: 180px; }
.panel-head.second span { width: 200px; letter-spacing: -.09px; }
.tools { display: flex; align-items: center; gap: 12.400px; flex: none; height: 42px; padding: 0 0 0 6px; background: linear-gradient(#e9e9e9, #d2d2d2); border-top: 1px solid #f4f4f4; border-bottom: 2px solid #8e8e8e; }
.tools svg { width: 28px; height: 28px; }
.tree { flex: none; height: 135px; list-style: none; background: #fff; }
.tree li { display: flex; align-items: center; height: 31px; padding-left: 37px; letter-spacing: -.9px; color: #111; }
.tree svg { width: 26px; height: 25px; margin-right: 12px; }
.tree .sel { background: #4f6fd3; color: #fff; font-weight: bold; letter-spacing: .54px; position: relative; }
.tree .sel::after { content: ""; position: absolute; inset: 1px 2px; border: 1.500px solid #b9c6f0; border-radius: 6px; }
.lib { display: flex; align-items: center; flex: none; height: 43px; padding-left: 5px; background: linear-gradient(#e9e9e9, #d2d2d2); border-top: 1px solid #f4f4f4; border-bottom: 2px solid #8e8e8e; color: #111; -webkit-text-stroke: .3px #111; }
.lib span { width: 120px; letter-spacing: -.45px; white-space: nowrap; }
.lib .caret { width: 18px; }
.lib b { display: flex; align-items: center; justify-content: center; height: 39px; width: 40px; border: 1.500px solid #8e8e8e; border-bottom: 0; }
.lib b svg { width: 28px; height: 28px; }
.search { flex: none; height: 52px; padding: 4px 8px 14px 9px; background: #fff; font-style: italic; color: #777; }
.search span { display: block; height: 34px; padding: 3px 0 0 4px; border: 2px solid #e4e4e4; border-top-color: #c4c4c4; border-radius: 3px; }
.widgets { display: flex; flex: 1; min-height: 0; background: #fff; overflow: hidden; }
.grid { display: grid; grid-template-columns: repeat(3, 130px); grid-auto-rows: 130px; width: 410px; padding-top: 3px; margin-left: -3px; margin-right: 3px; }
.grid figure { position: relative; padding-top: 71px; }
.grid figure > svg:first-child { width: 67px; height: 67px; margin: -71px 0 4px 32px; }
.grid figcaption { text-align: center; white-space: nowrap; }
.grid .tight { letter-spacing: -.45px; }
.grid .html { letter-spacing: -.25px; padding-left: 4px; }
.grid mark { display: inline-block; margin-top: -3px; padding: 3px 2px 4px; border-radius: 14px; background: #4f6fd3; color: #fff; }
.grid .info { position: absolute; left: 106px; top: -3px; width: 26px; height: 26px; }
.scroll { display: flex; flex-direction: column; width: 28px; background: #f0eff0; border-left: 1px solid #ddd; }
.up { height: 30px; display: flex; align-items: center; justify-content: center; }
.up::after { content: ""; border: 5px solid transparent; border-bottom: 6px solid #777; border-top: 0; }
.thumb { flex: 1; display: flex; justify-content: center; border: 2px solid #8a8a8a; border-bottom: 0; border-radius: 4px 4px 0 0; background: linear-gradient(90deg, #f6f6f6, #eaeaea 40%, #c4c4c8 60%, #dcdcdc); }
.thumb i { width: 12px; height: 15px; margin: 437px 2px 0 0; background: repeating-linear-gradient(#444 0 2px, #eee 2px 6px); }

.splitter { width: 9px; flex: none; padding-top: 709px; background: #cfcfcf; }
.splitter i { height: 175px; margin-left: 1px; background: radial-gradient(circle at 7px 87px, #fff 4px, transparent 5px), #777; }

.editor { display: flex; flex-direction: column; flex: 1; min-width: 0; background: #fff; }
.tabs { display: flex; align-items: flex-end; height: 36px; flex: none; }
.tab { display: flex; align-items: center; height: 31px; flex: none; border: 2px solid #8a8a8a; border-radius: 9px 9px 0 0; background: linear-gradient(#e4e4e4, #cfcfcf); color: #777; padding-bottom: 1px; }
.tab svg { width: 14px; height: 14px; }
.pick { width: 37px; justify-content: center; margin-right: -1px; }
.home { width: 178px; padding-left: 45px; margin-right: -1px; }
.home span { width: 99px; letter-spacing: -1.100px; }
.tab.active { width: 176px; padding-left: 19px; background: #faf9fb; border-bottom-color: #faf9fb; color: #000; font-weight: bold; }
.tab.active span { width: 124px; letter-spacing: .54px; }
.fill { flex: 1; height: 2px; background: #8a8a8a; }
.hruler { position: relative; height: 31px; flex: none; padding-left: 26.200px; background: #fbfafc; border-bottom: 2px solid #585858; }
.hruler svg { height: 31px; }
.hruler .nums { position: absolute; left: 26px; top: 3px; display: flex; }
.hruler .nums span { width: 175.700px; padding-left: 2px; letter-spacing: -.3px; }
.nums { font-size: 15.500px; line-height: 24px; color: #666; }
.stage { display: flex; flex: 1; min-height: 0; }
.vruler { position: relative; width: 27px; flex: none; background: #fbfafc; border-right: 2px solid #585858; overflow: hidden; }
.vruler .nums { position: absolute; top: 0; left: -2px; }
.vruler .nums span { display: block; height: 175.700px; width: 24px; writing-mode: vertical-rl; transform: rotate(180deg); text-align: right; padding-bottom: 5px; }
.canvas { position: relative; flex: 1; overflow: hidden; background: #fefeff; }
.dots { position: absolute; left: 0; top: 0; margin-left: -.800px; }
.phone { position: relative; width: 560px; height: 832px; background: repeating-linear-gradient(90deg, #d0d5db 0 6px, #d3d6dd 6px 12px); }
.phone-head { display: flex; align-items: flex-start; height: 79px; padding: 14px 0 0 10px; background: linear-gradient(#b0bccd, #8ea2bd 48%, #7f96b6 52%, #6f88aa); border-bottom: 2px solid #45596d; }
.back { position: relative; width: 110px; height: 54px; }
.back svg { width: 110px; height: 54px; }
.back span { position: absolute; left: 32px; top: 13px; font-size: 23px; line-height: 26px; letter-spacing: .4px; color: #fff; -webkit-text-stroke: .7px #fff; }
.phone h1 { margin: 11px 0 0 16px; font-size: 36px; line-height: 40px; letter-spacing: .35px; color: #fff; white-space: nowrap; }
.card { margin: 0 15.500px 0 16px; background: #fff; border: 2px solid #a3a6a9; border-radius: 9px; overflow: hidden; font-size: 28px; line-height: 34px; color: #9a9a9a; }
.form { height: 242px; margin-top: 22px; }
.form p { height: 80.500px; padding: 22px 0 0 15.500px; border-bottom: 2px solid #a3a6a9; }
.form p:last-child { border: 0; }
.f-first { letter-spacing: -.3px; }
.f-last { letter-spacing: -.55px; }
.f-mail { letter-spacing: -.1px; }
.note { height: 291px; margin-top: 25px; padding: 17px 0 0 15.500px; letter-spacing: -.21px; }
.send { display: flex; align-items: center; justify-content: center; width: 335px; height: 80px; margin: 34px 0 0 95px; padding: 0 3px 4px 0; border: 2px solid #7f8ba3; border-radius: 8px; background: linear-gradient(#9aafe6, #4d7bda 48%, #3566d2 70%, #2456c8); font-size: 28px; font-weight: bold; letter-spacing: .33px; color: #fff; white-space: nowrap; }

.banner { position: absolute; left: 0; right: 0; top: 712px; height: 165px; display: flex; justify-content: center; background: linear-gradient(#0076d9, #0063b8 50%, #00529a); font: 73px/160px "Open Sans", "Noto Sans", sans-serif; letter-spacing: .16px; color: #fff; -webkit-text-stroke: 1.600px #fff; white-space: nowrap; }
```
